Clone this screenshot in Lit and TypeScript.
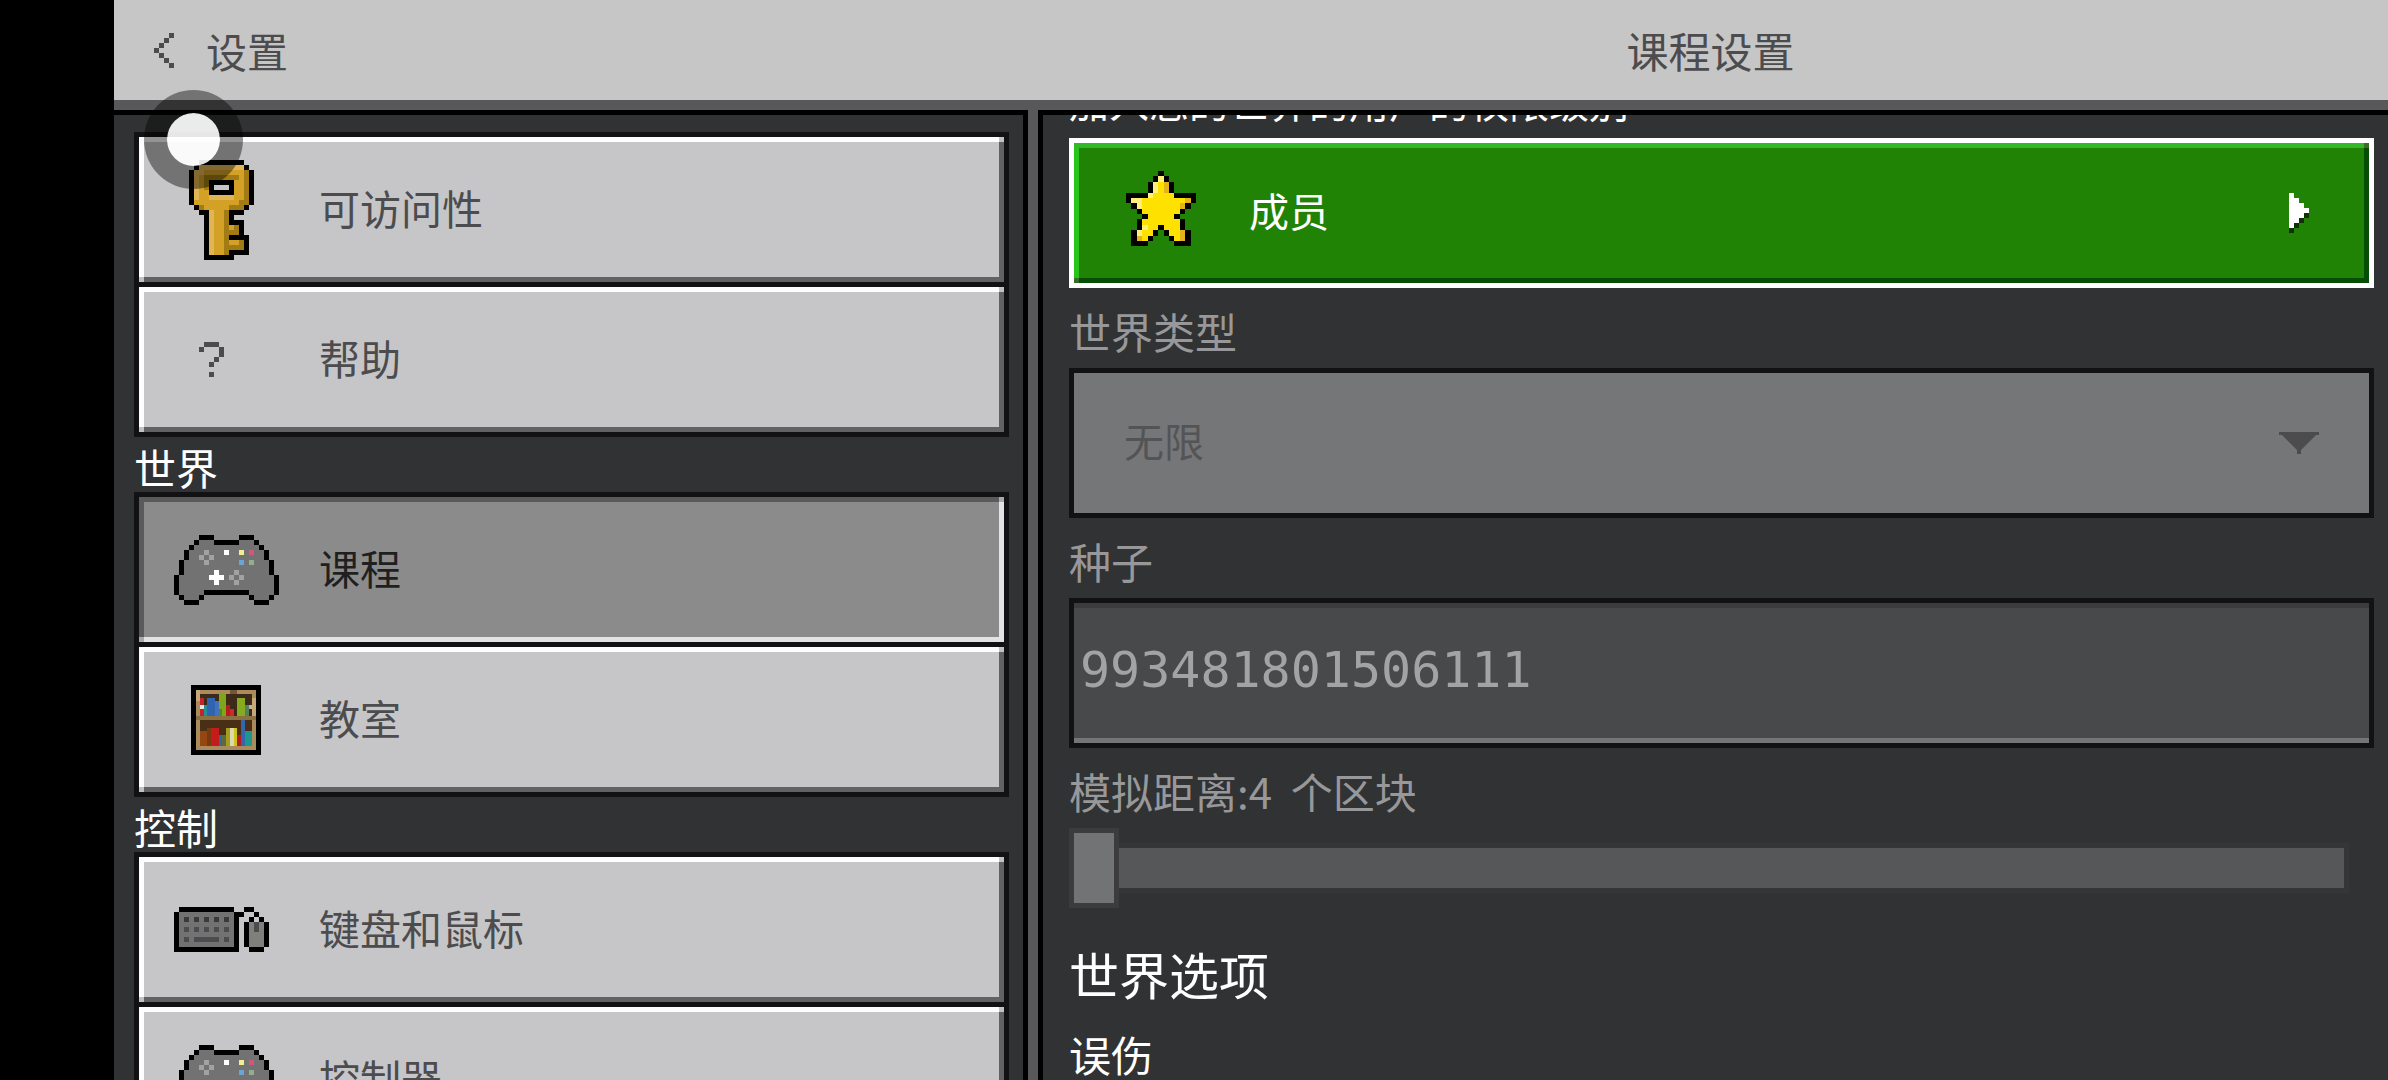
import { LitElement, html, svg, css } from "lit";
import { customElement, property } from "lit/decorators.js";
import { classMap } from "lit/directives/class-map.js";

/* Pixel icons: one character per square, looked up in PALETTE; "." stays clear. */
const PALETTE: Record<string, string> = {
  k: "#000000",
  g: "#727273",
  m: "#7f807c",
  d: "#3a3a3b",
  n: "#4c4c4e",
  a: "#a2a2a4",
  w: "#ffffff",
  y: "#f3ec95",
  r: "#d6557c",
  b: "#69a5d8",
  e: "#94ad8b",
  Y: "#d2a126",
  L: "#e2b554",
  D: "#a27b14",
  S: "#ffe100",
  T: "#fff07a",
  O: "#e3b41c",
  s: "#12300a",
};

const ICONS: Record<string, string[]> = {
  back: ["...n", "..n.", ".n..", "n...", ".n..", "..n.", "...n"],
  key: [
    ".....kkkkkkkkk.......",
    "....kLLLLLLLLLk......",
    "...kLLYYYYYYYYDk.....",
    "...kLYDDDDDDDYDk.....",
    "...kLYDkkkkkYYDk.....",
    "...kLYDk...kYYDk.....",
    "...kLYYkkkkkYYDk.....",
    "...kLYYLLLLLYYDk.....",
    "...kYYYYYYYYYDDk.....",
    "....kDYYYYYDDDk......",
    ".....kkLYYDkkk.......",
    "......kLYYDk.........",
    "......kLYYDkkk.......",
    "......kLYYDYDk.......",
    "......kLYYDDDk.......",
    "......kLYYDkkkk......",
    "......kLYYDYYDk......",
    "......kLYYDDDDk......",
    "......kLYYDkkkk......",
    "......kkkkkk.........",
  ],
  help: [
    "......nnn............",
    ".....n...n...........",
    ".........n...........",
    "........n............",
    ".......n.............",
    ".....................",
    ".......n.............",
  ],
  controller: [
    ".....kkk.....kkk.....",
    "....kgggkkkkkgggk....",
    "...kgggggggggggggk...",
    "..kgggagggwggygrggk..",
    "..kggagaggggggggggk..",
    ".kggggaggggggbgegggk.",
    ".kgggggggggggggggggk.",
    ".kggggggwgggaggggggk.",
    "kggggggwwwgagaggggggk",
    "kgggggggwgggagggggggk",
    "kgggggggggggggggggggk",
    "kgggggkkkkkkkkkgggggk",
    ".kgggk.........kgggk.",
    "..kkk...........kkk..",
  ],
  keyboard: [
    ".kkkkkkkkkkk..kk.....",
    "kgggggggggggkk..k....",
    "kgdgdgdgdgdgk..k.k...",
    "kgggggggggggk.kmnmk..",
    "kgngngngngngk.kmnmk..",
    "kgggggggggggk.kmmmk..",
    "kgngnnnnngngk.kmmmk..",
    "kgggggggggggk.kmmmk..",
    "kkkkkkkkkkkkk..kkk...",
  ],
  star: [
    "......k......",
    ".....kTk.....",
    "....kTSOk....",
    "....kTSOk....",
    "kkkkTSSSSkkkk",
    "kTTSSSSSSSSOk",
    ".kTSSSSSSSOk.",
    "..kSSSSSSSk..",
    "...kSSSSSk...",
    "..kSSSSSSSk..",
    "..kTSSkSSSk..",
    ".kTSSk.kSSOk.",
    ".kOSk...kSOk.",
    ".kkk.....kkk.",
  ],
  arrow: ["w...", "ww..", "www.", "wwww", "wwws", "wws.", "ws..", "s..."],
};

const pixels = (rows: string[]) =>
  rows.flatMap((row, y) =>
    [...row].flatMap((c, x) =>
      PALETTE[c] ? [svg`<rect x=${x} y=${y} width="1" height="1" fill=${PALETTE[c]}></rect>`] : []
    )
  );

/* Books as [x, y, width, height, colour] on a 16-square shelf. */
const BOOKS: [number, number, number, number, string][] = [
  [0, 0, 16, 16, "#a98b5c"], [1, 1, 14, 6, "#3d2a18"], [1, 8, 14, 6, "#4a2f17"],
  [0, 7, 16, 1, "#8b7042"], [9, 0, 2, 1, "#6f5936"], [0, 0, 1, 3, "#c4a878"], [15, 2, 1, 5, "#c4a878"],
  [1, 2, 1, 5, "#c2242a"], [1, 4, 1, 1, "#e8e8e8"], [2, 4, 1, 3, "#2a8f95"], [3, 2, 2, 5, "#2f64b0"],
  [5, 3, 1, 4, "#4372bd"], [6, 1, 2, 4, "#7fa61b"], [6, 5, 1, 2, "#4c8a2f"], [7, 5, 1, 2, "#7fa61b"],
  [8, 4, 1, 3, "#b61c1c"], [9, 5, 1, 2, "#d0282a"], [11, 2, 2, 5, "#86ab20"], [13, 4, 1, 3, "#557f5e"],
  [14, 4, 1, 1, "#b9b49c"], [1, 11, 2, 4, "#96470f"], [3, 10, 1, 5, "#7a3a10"], [4, 10, 2, 5, "#c41b1b"],
  [6, 12, 1, 3, "#2f6a9a"], [8, 10, 1, 5, "#a39d20"], [9, 10, 1, 5, "#dcd8b0"], [10, 10, 1, 5, "#d0c41c"],
  [11, 12, 1, 3, "#b51b1b"], [12, 8, 1, 7, "#3566ad"], [13, 11, 2, 4, "#1d9690"], [7, 12, 1, 3, "#5d6b3a"],
];

@customElement("pixel-icon")
class PixelIcon extends LitElement {
  @property() name = "";

  static styles = css`
    :host { display: block; flex: none; line-height: 0; }
    .icon { display: block; width: 100%; height: auto; shape-rendering: crispEdges; }
  `;

  render() {
    if (this.name === "bookshelf") {
      return html`<svg class="icon" viewBox="0 0 105 70" aria-hidden="true">
        <rect x="17" y="0" width="70" height="70" fill="#000"></rect>
        <g transform="translate(22 5) scale(3.75)">
          ${BOOKS.map(([x, y, w, h, c]) => svg`<rect x=${x} y=${y} width=${w} height=${h} fill=${c}></rect>`)}
        </g>
      </svg>`;
    }
    const rows = ICONS[this.name] ?? [""];
    return html`<svg class="icon" viewBox="0 0 ${rows[0].length} ${rows.length}" aria-hidden="true">
      ${pixels(rows)}
    </svg>`;
  }
}

interface NavItem { icon: string; label: string; selected?: boolean }
interface NavGroup { title: string; items: NavItem[] }

const NAV: NavGroup[] = [
  { title: "", items: [{ icon: "key", label: "可访问性" }, { icon: "help", label: "帮助" }] },
  {
    title: "世界",
    items: [{ icon: "controller", label: "课程", selected: true }, { icon: "bookshelf", label: "教室" }],
  },
  { title: "控制", items: [{ icon: "keyboard", label: "键盘和鼠标" }, { icon: "controller", label: "控制器" }] },
];

@customElement("app-root")
class AppRoot extends LitElement {
  static styles = css`
    :host {
      display: block;
      position: relative;
      height: 100vh;
      overflow: hidden;
      background: #000;
      font-family: "Noto Sans CJK SC", sans-serif;
      font-size: 42px;
      line-height: 50px;
      color: #fff;
    }
    * { box-sizing: border-box; }
    button, select, input { font: inherit; margin: 0; border-radius: 0; }
    .screen { display: flex; flex-direction: column; height: 100%; margin-left: 114px; background: #58585a; }

    .header, .body {
      display: grid;
      grid-template-columns: minmax(0, 914fr) minmax(0, 1350fr);
      column-gap: 10px;
    }
    .header { flex: none; height: 100px; background: #c6c6c6; color: #4c4c4e; align-items: center; }
    .back {
      display: flex;
      align-items: center;
      justify-self: start;
      gap: 32px;
      padding: 0 40px;
      border: 0;
      background: none;
      color: inherit;
      font-size: 41px;
    }
    .back-icon { width: 20px; }
    .title { margin: 0; padding-right: 5px; font-size: inherit; font-weight: 400; text-align: center; }

    .body { flex: 1; min-height: 0; margin-top: 10px; }
    .pane { min-width: 0; overflow: hidden; background: #313233; border-top: 5px solid #000; }
    .nav { border-right: 5px solid #000; padding: 17px 14px 0 20px; }
    .options { border-left: 5px solid #000; padding: 0 14px 0 26px; }
    .scrolled { margin-top: -57px; }

    .group-title { margin: 0; height: 55px; line-height: 60px; font-size: inherit; font-weight: 400; }
    .list { list-style: none; margin: 0; padding: 0; }
    .item + .item { margin-top: -5px; }

    .bevel {
      background:
        linear-gradient(var(--corner), var(--corner)) left bottom / 5px 5px no-repeat,
        linear-gradient(var(--corner), var(--corner)) right top / 5px 5px no-repeat,
        linear-gradient(var(--top), var(--top)) left top / 100% 5px no-repeat,
        linear-gradient(var(--left), var(--left)) left top / 5px 100% no-repeat,
        linear-gradient(var(--low), var(--low)) left bottom / 100% 5px no-repeat,
        linear-gradient(var(--low), var(--low)) right top / 5px 100% no-repeat,
        var(--face);
    }
    .nav-button {
      --face: #c6c6c8; --top: #fdfdfd; --left: #fdfdfd; --low: #626264; --corner: #c2c2c4;
      display: flex;
      align-items: center;
      gap: 40px;
      width: 100%;
      height: 155px;
      padding: 0 35px;
      border: 5px solid #121214;
      color: #4c4c4e;
      font-size: 41px;
      text-align: left;
    }
    .nav-button.selected {
      --face: #8b8b8c; --top: #5a5a5b; --left: #5a5a5b; --low: #e3e3e5; --corner: #a9a9aa;
      color: #1f1f20;
    }
    .nav-icon { width: 105px; }
    .nav-label, .role-name { padding-bottom: 6px; }

    .label { display: block; height: 80px; line-height: 86px; color: #98989a; white-space: pre; }
    .label.caption { color: #fff; font-size: 40px; }
    .role {
      --face: #218306; --top: #33b828; --left: #28c41a; --low: #064d06; --corner: #3c6c2a;
      display: flex;
      align-items: center;
      width: 100%;
      height: 150px;
      padding: 0 60px 0 52px;
      border: 5px solid #fff;
      color: #fff;
      font-size: 40px;
      text-align: left;
    }
    .star { width: 70px; margin: 0 53px 8px 0; }
    .role-name { flex: 1; }
    .arrow { width: 20px; }

    .select-box { display: grid; align-items: center; }
    .select-box > * { grid-area: 1 / 1; }
    .select {
      width: 100%;
      height: 150px;
      padding: 0 50px 6px;
      appearance: none;
      border: 5px solid #121214;
      background: #757678;
      color: #545456;
      font-size: 40px;
      opacity: 1;
    }
    .chevron { justify-self: end; width: 40px; height: 22px; margin-right: 55px; pointer-events: none; }
    .seed {
      display: block;
      width: 100%;
      height: 150px;
      padding: 0 6px 6px;
      border: 5px solid #121214;
      background:
        linear-gradient(#3c3c3e, #3c3c3e) left top / 100% 5px no-repeat,
        linear-gradient(#747577, #747577) left bottom / 100% 5px no-repeat,
        #48494a;
      color: #a2a3a5;
      font-family: "DejaVu Sans Mono", monospace;
      font-size: 50px;
    }
    .slider-row { display: flex; padding-right: 25px; }
    .slider { flex: 1; min-width: 0; height: 80px; appearance: none; background: none; }
    .slider::-webkit-slider-runnable-track {
      height: 50px;
      background: #565759;
      border: 5px solid #353638;
      border-left: 0;
    }
    .slider::-webkit-slider-thumb {
      appearance: none;
      width: 50px;
      height: 80px;
      margin-top: -20px;
      border: 5px solid #3c3c3e;
      border-radius: 0;
      background: #727375;
    }
    .section { margin: 0; padding: 35px 0 8px; font-size: 50px; line-height: 60px; font-weight: 400; }
    .label.toggle { color: #fff; }

    .touch {
      position: absolute;
      left: 144px;
      top: 90px;
      width: 99px;
      height: 99px;
      border: 23px solid rgba(0, 0, 0, 0.42);
      border-radius: 50%;
      background: rgba(255, 255, 255, 0.9);
      background-clip: padding-box;
      pointer-events: none;
    }
  `;

  private renderGroup(group: NavGroup) {
    return html`
      ${group.title ? html`<h2 class="group-title">${group.title}</h2>` : ""}
      <ul class="list">
        ${group.items.map(
          (item) => html`<li class="item">
            <button class=${classMap({ "nav-button": true, bevel: true, selected: !!item.selected })}>
              <pixel-icon class="nav-icon" name=${item.icon}></pixel-icon>
              <span class="nav-label">${item.label}</span>
            </button>
          </li>`
        )}
      </ul>
    `;
  }

  render() {
    return html`
      <div class="screen">
        <header class="header">
          <button class="back"><pixel-icon class="back-icon" name="back"></pixel-icon><span>设置</span></button>
          <h1 class="title">课程设置</h1>
        </header>
        <div class="body">
          <nav class="pane nav">${NAV.map((g) => this.renderGroup(g))}</nav>
          <main class="pane options">
            <div class="scrolled">
              <label class="label caption" for="role">加入您的世界的用户的权限级别</label>
              <button id="role" class="role bevel">
                <pixel-icon class="star" name="star"></pixel-icon>
                <span class="role-name">成员</span>
                <pixel-icon class="arrow" name="arrow"></pixel-icon>
              </button>

              <label class="label" for="type">世界类型</label>
              <div class="select-box">
                <select id="type" class="select" disabled><option>无限</option></select>
                <svg class="chevron" viewBox="0 0 40 22" aria-hidden="true">
                  <path d="M0 0H40V3H37L22 18V22H18V18L3 3H0Z" fill="#4c4c4e"></path>
                </svg>
              </div>

              <label class="label" for="seed">种子</label>
              <input id="seed" class="seed" type="text" value="993481801506111" disabled />

              <label class="label" for="distance">模拟距离:4  个区块</label>
              <div class="slider-row">
                <input id="distance" class="slider" type="range" min="4" max="12" value="4" disabled />
              </div>

              <h2 class="section">世界选项</h2>
              <span class="label toggle">误伤</span>
            </div>
          </main>
        </div>
      </div>
      <div class="touch"></div>
    `;
  }
}
